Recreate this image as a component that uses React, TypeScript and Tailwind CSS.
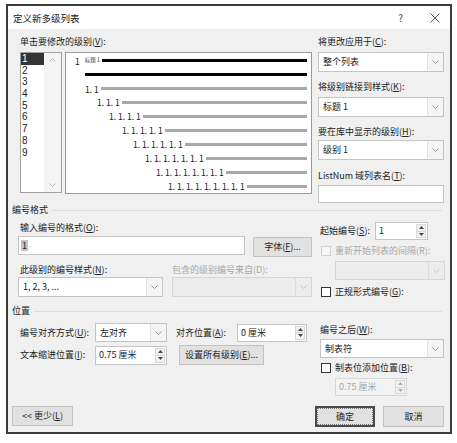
import React from "react"

// Word "定义新多级列表" dialog

const LEVELS = ["1", "2", "3", "4", "5", "6", "7", "8", "9"]

// indent + label for preview rows 3..9
const PREVIEW_ROWS = [
  { pad: "pl-[19px]", text: "1. 1" },
  { pad: "pl-[31px]", text: "1. 1. 1" },
  { pad: "pl-[43px]", text: "1. 1. 1. 1" },
  { pad: "pl-[56px]", text: "1. 1. 1. 1. 1" },
  { pad: "pl-[67px]", text: "1. 1. 1. 1. 1. 1" },
  { pad: "pl-[79px]", text: "1. 1. 1. 1. 1. 1. 1" },
  { pad: "pl-[90px]", text: "1. 1. 1. 1. 1. 1. 1. 1" },
  { pad: "pl-[102px]", text: "1. 1. 1. 1. 1. 1. 1. 1. 1" },
]

function Lbl({ text, k, disabled, after = ":" }: { text: string; k: string; disabled?: boolean; after?: string }) {
  return (
    <div className={`whitespace-nowrap text-[9px] leading-[12px] ${disabled ? "text-[#a8a8a8]" : "text-[#222]"}`}>
      {text}(<span className={disabled ? "" : "underline"}>{k}</span>){after}
    </div>
  )
}

function Chevron({ up, color = "#8a8a8a" }: { up?: boolean; color?: string }) {
  return (
    <svg width="7" height="4" viewBox="0 0 7 4" className="block">
      <path d={up ? "M0.5 3.5 L3.5 0.5 L6.5 3.5" : "M0.5 0.5 L3.5 3.5 L6.5 0.5"} fill="none" stroke={color} strokeWidth="0.9" />
    </svg>
  )
}

function Select({ value, className, disabled }: { value?: string; className: string; disabled?: boolean }) {
  return (
    <div className={`flex border ${disabled ? "border-[#d6d6d6] bg-[#ececec]" : "border-[#c4c4c4] bg-white"} ${className}`}>
      <div className="flex flex-1 items-center pl-[4px] text-[9px] text-[#222]">{value}</div>
      <div className={`flex w-[16px] items-center justify-center border-l ${disabled ? "border-[#dcdcdc]" : "border-[#e2e2e2] bg-[#f4f4f4]"}`}>
        <Chevron color={disabled ? "#c0c0c0" : "#8a8a8a"} />
      </div>
    </div>
  )
}

function Spin({ value, className, disabled }: { value: string; className: string; disabled?: boolean }) {
  const tri = disabled ? "#b0b0b0" : "#444"
  return (
    <div className={`flex border ${disabled ? "border-[#d6d6d6] bg-[#f3f3f3]" : "border-[#c4c4c4] bg-white"} ${className}`}>
      <div className={`flex flex-1 items-center pl-[3px] text-[9px] ${disabled ? "text-[#a8a8a8]" : "text-[#222]"}`}>{value}</div>
      <div className="my-[1px] mr-[1px] flex w-[10px] flex-col border border-[#d8d8d8] bg-[#f2f2f2]">
        <div className="flex flex-1 items-center justify-center border-b border-[#d8d8d8]">
          <svg width="5" height="3" viewBox="0 0 5 3" className="block"><path d="M0 3 L2.5 0 L5 3 Z" fill={tri} /></svg>
        </div>
        <div className="flex flex-1 items-center justify-center">
          <svg width="5" height="3" viewBox="0 0 5 3" className="block"><path d="M0 0 L2.5 3 L5 0 Z" fill={tri} /></svg>
        </div>
      </div>
    </div>
  )
}

function Btn({ children, className, focused }: { children: React.ReactNode; className: string; focused?: boolean }) {
  return (
    <div
      className={`flex items-center justify-center bg-[#e1e1e1] text-[9px] text-[#222] ${
        focused ? "border-2 border-[#4a4a4a]" : "border border-[#c2c2c2]"
      } ${className}`}
    >
      {focused ? (
        <div className="flex h-full w-full items-center justify-center border border-dotted border-[#777]">{children}</div>
      ) : (
        children
      )}
    </div>
  )
}

function Check({ label, k, disabled }: { label: string; k: string; disabled?: boolean }) {
  return (
    <div className="flex h-[12px] items-center">
      <div className={`h-[10px] w-[10px] border ${disabled ? "border-[#d0d0d0] bg-[#f6f6f6]" : "border-[#333] bg-white"}`} />
      <div className="ml-[4px]">
        <Lbl text={label} k={k} disabled={disabled} />
      </div>
    </div>
  )
}

function SectionHead({ title }: { title: string }) {
  return (
    <div className="flex h-[12px] items-center">
      <span className="text-[9px] leading-[12px] text-[#222]">{title}</span>
      <div className="ml-[4px] mr-[2px] h-px flex-1 bg-[#dedede]" />
    </div>
  )
}

export default function App() {
  return (
    <div className="h-[443px] w-[457px] overflow-hidden bg-white pl-[6px] pt-[4px] font-['Noto_Sans_CJK_SC','Noto_Sans',sans-serif] text-[9px] leading-[12px]">
      <div className="flex h-[430px] w-[446px] flex-col border-2 border-[#3c3c3c] bg-[#f0f0f0]">
        {/* title bar */}
        <div className="flex h-[23px] items-center bg-white pl-[5px]">
          <span className="text-[9.5px] text-[#222]">定义新多级列表</span>
          <div className="flex-1" />
          <span className="text-[10px] text-[#444]">?</span>
          <div className="ml-[27px] mr-[10px] flex items-center">
            <svg width="10" height="10" viewBox="0 0 10 10" className="block">
              <path d="M0.5 0.5 L9.5 9.5 M9.5 0.5 L0.5 9.5" stroke="#444" strokeWidth="0.9" />
            </svg>
          </div>
        </div>

        {/* body */}
        <div className="flex flex-1 flex-col pl-[4px] pr-[6px]">
          {/* top part */}
          <div className="ml-[6px] mt-[7px] flex">
            <div className="flex w-[294px] flex-col">
              <div className="pl-[2px]">
                <Lbl text="单击要修改的级别" k="V" />
              </div>
              <div className="mt-[4px] flex">
                <div className="ml-[2px] flex h-[141px] w-[42px] border border-[#a0a0a0] bg-white">
                  <div className="flex flex-1 flex-col">
                    {LEVELS.map((l, i) => (
                      <div
                        key={l}
                        className={`flex h-[11.7px] items-center pl-[1px] font-['Liberation_Sans',sans-serif] text-[10px] leading-[11.7px] ${
                          i === 0 ? "bg-[#333] text-white" : "text-[#222]"
                        }`}
                      >
                        {l}
                      </div>
                    ))}
                  </div>
                  <div className="flex w-[17px] flex-col items-center justify-between bg-[#f5f5f5] py-[5px]">
                    <Chevron up color="#b0b0b0" />
                    <Chevron color="#b0b0b0" />
                  </div>
                </div>
                <div className="ml-[3px] flex h-[142px] w-[247px] flex-col border border-[#9a9a9a] bg-white pr-[4px] pt-[1px]">
                  <div className="flex h-[14px] items-center pl-[9px]">
                    <span className="text-[8.5px] leading-none text-[#222]">1</span>
                    <span className="ml-[5px] text-[5.5px] leading-none text-[#333]">标题 1</span>
                    <div className="ml-[2px] h-[3px] flex-1 bg-black" />
                  </div>
                  <div className="flex h-[14px] items-center pl-[19px]">
                    <div className="h-[3px] flex-1 bg-black" />
                  </div>
                  {PREVIEW_ROWS.map((r) => (
                    <div key={r.text} className={`flex h-[14px] items-center ${r.pad}`}>
                      <span className="whitespace-nowrap text-[8.5px] leading-none text-[#222]">{r.text}</span>
                      <div className="ml-[2px] h-[3px] flex-1 bg-[#a8a8a8]" />
                    </div>
                  ))}
                </div>
              </div>
            </div>

            <div className="ml-[6px] flex w-[127px] flex-col">
              <Lbl text="将更改应用于" k="C" />
              <Select value="整个列表" className="mt-[4px] h-[20px]" />
              <div className="mt-[9px]">
                <Lbl text="将级别链接到样式" k="K" />
              </div>
              <Select value="标题 1" className="mt-[4px] h-[20px]" />
              <div className="mt-[9px]">
                <Lbl text="要在库中显示的级别" k="H" />
              </div>
              <Select value="级别 1" className="mt-[2px] h-[20px]" />
              <div className="mt-[10px]">
                <Lbl text="ListNum 域列表名" k="T" />
              </div>
              <div className="mt-[3px] h-[18px] border border-[#c4c4c4] bg-white" />
            </div>
          </div>

          {/* 编号格式 */}
          <div className="mt-[1px]">
            <SectionHead title="编号格式" />
          </div>
          <div className="ml-[6px] flex">
            <div className="flex w-[294px] flex-col">
              <div className="mt-[6px] pl-[2px]">
                <Lbl text="输入编号的格式" k="O" />
              </div>
              <div className="mt-[2px] flex items-start">
                <div className="flex h-[19px] w-[227px] items-center border border-[#c4c4c4] bg-white pl-[2px]">
                  <span className="bg-[#c4c4c4] px-[1px] text-[9px] leading-[11px] text-[#222]">1</span>
                  <span className="ml-[1px] text-[6px] leading-[6px] text-[#999]">-</span>
                </div>
                <Btn className="ml-[8px] mt-[1px] h-[20px] w-[59px]">
                  字体(<span className="underline">F</span>)...
                </Btn>
              </div>
              <div className="mt-[7px] flex">
                <div className="w-[154px] pl-[2px]">
                  <Lbl text="此级别的编号样式" k="N" />
                </div>
                <Lbl text="包含的级别编号来自" k="D" disabled />
              </div>
              <div className="mt-[1px] flex">
                <Select value="1, 2, 3, ..." className="h-[20px] w-[145px]" />
                <Select className="ml-[9px] h-[20px] w-[140px]" disabled />
              </div>
            </div>

            <div className="ml-[8px] flex flex-1 flex-col">
              <div className="mt-[6px] flex items-center">
                <div className="w-[55px]">
                  <Lbl text="起始编号" k="S" />
                </div>
                <Spin value="1" className="h-[18px] w-[53px]" />
              </div>
              <div className="mt-[5px] pl-[1px]">
                <Check label="重新开始列表的间隔" k="R" disabled />
              </div>
              <Select className="ml-[15px] mt-[4px] h-[19px] w-[110px]" disabled />
              <div className="mt-[6px] pl-[1px]">
                <Check label="正规形式编号" k="G" />
              </div>
            </div>
          </div>

          {/* 位置 */}
          <div className="mt-[7px]">
            <SectionHead title="位置" />
          </div>
          <div className="ml-[6px] flex">
            <div className="flex w-[294px] flex-col">
              <div className="mt-[6px] flex h-[19px] items-center">
                <div className="w-[77px] pl-[2px]">
                  <Lbl text="编号对齐方式" k="U" />
                </div>
                <Select value="左对齐" className="h-[19px] w-[72px]" />
                <div className="ml-[9px] w-[61px]">
                  <Lbl text="对齐位置" k="A" />
                </div>
                <Spin value="0 厘米" className="h-[18px] w-[70px]" />
              </div>
              <div className="mt-[3px] flex h-[20px] items-center">
                <div className="w-[77px] pl-[2px]">
                  <Lbl text="文本缩进位置" k="I" />
                </div>
                <Spin value="0.75 厘米" className="h-[19px] w-[72px]" />
                <Btn className="ml-[12px] h-[20px] w-[85px]">
                  设置所有级别(<span className="underline">E</span>)...
                </Btn>
              </div>
            </div>

            <div className="ml-[8px] flex flex-1 flex-col">
              <div className="mt-[7px]">
                <Lbl text="编号之后" k="W" />
              </div>
              <Select value="制表符" className="mt-[3px] h-[19px] w-[124px]" />
              <div className="mt-[4px] pl-[1px]">
                <Check label="制表位添加位置" k="B" />
              </div>
              <Spin value="0.75 厘米" className="ml-[15px] mt-[4px] h-[18px] w-[72px]" disabled />
            </div>
          </div>

          {/* buttons */}
          <div className="mt-[10px] flex">
            <Btn className="h-[20px] w-[61px]">
              {"<< "}更少(<span className="underline">L</span>)
            </Btn>
            <div className="flex-1" />
            <Btn className="h-[21px] w-[60px]" focused>
              确定
            </Btn>
            <Btn className="ml-[8px] h-[21px] w-[61px]">取消</Btn>
          </div>
        </div>
      </div>
    </div>
  )
}
